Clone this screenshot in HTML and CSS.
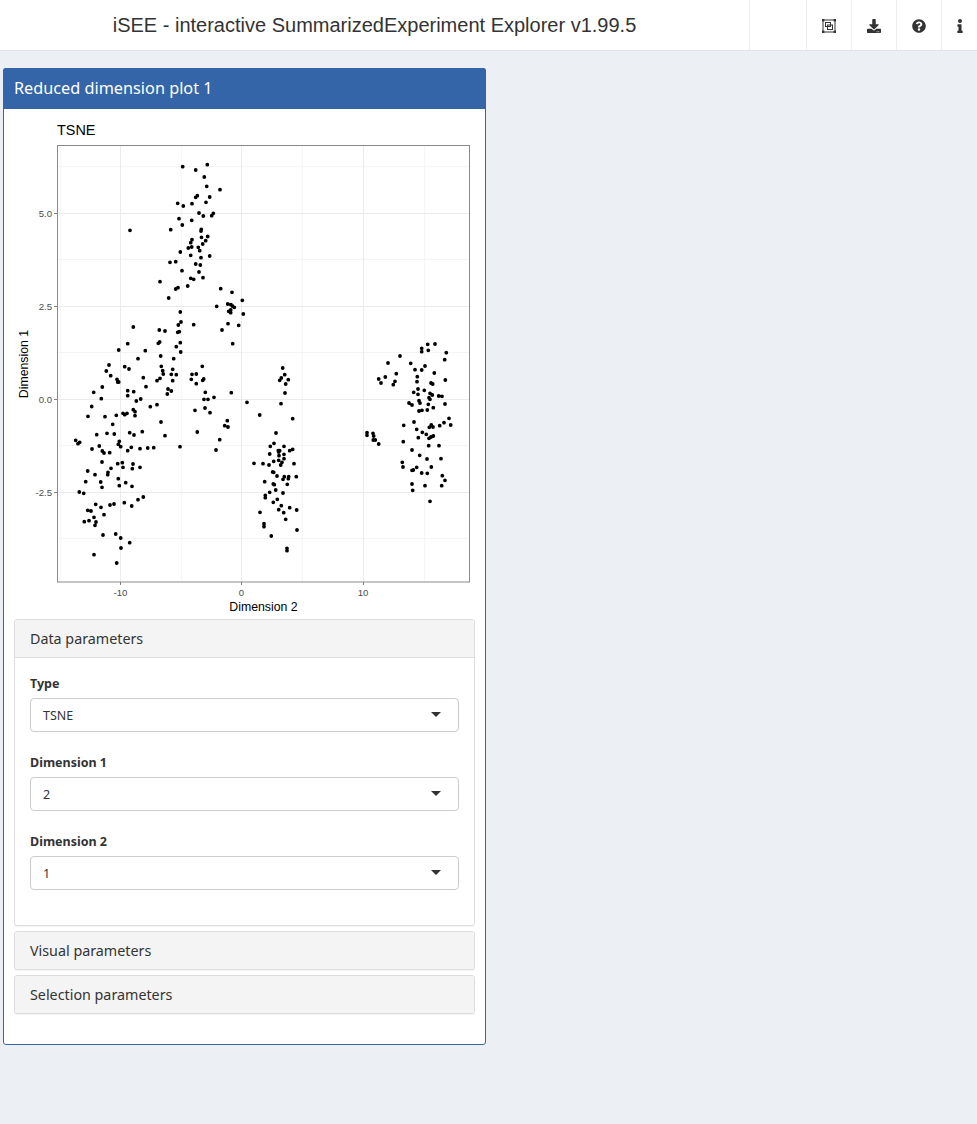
FILE: index.html
```html
<!DOCTYPE html>
<html lang="en">
<head>
<meta charset="UTF-8">
<meta name="viewport" content="width=device-width, initial-scale=1.0">
<title>iSEE - interactive SummarizedExperiment Explorer v1.99.5</title>
<link rel="stylesheet" href="styles.css">
</head>
<body>

<header class="topbar">
    <div class="app-title">iSEE - interactive SummarizedExperiment Explorer v1.99.5</div>
    <div class="nav-item nav-blank"></div>
    <div class="nav-item">
        <svg class="icon" viewBox="0 0 14 14" fill="none" stroke="#333">
            <rect x="1" y="1" width="12" height="12" stroke-width="1"/>
            <rect x="3.5" y="3.5" width="5" height="4" stroke-width="1"/>
            <rect x="5.5" y="6" width="5" height="4.5" stroke-width="1"/>
            <g fill="#333" stroke="none">
                <rect x="0" y="0" width="2.4" height="2.4"/>
                <rect x="11.6" y="0" width="2.4" height="2.4"/>
                <rect x="0" y="11.6" width="2.4" height="2.4"/>
                <rect x="11.6" y="11.6" width="2.4" height="2.4"/>
            </g>
        </svg>
    </div>
    <div class="nav-item">
        <svg class="icon" viewBox="0 0 512 512"><path fill="#333" d="M216 0h80c13.3 0 24 10.7 24 24v168h87.7c17.8 0 26.7 21.5 14.1 34.1L269.7 378.3c-7.5 7.5-19.8 7.5-27.3 0L90.1 226.1c-12.6-12.6-3.7-34.1 14.1-34.1H192V24c0-13.3 10.7-24 24-24zm296 376v112c0 13.3-10.7 24-24 24H24c-13.3 0-24-10.7-24-24V376c0-13.3 10.7-24 24-24h146.7l49 49c20.1 20.1 52.5 20.1 72.6 0l49-49H488c13.3 0 24 10.7 24 24zm-124 88c0-11-9-20-20-20s-20 9-20 20 9 20 20 20 20-9 20-20zm64 0c0-11-9-20-20-20s-20 9-20 20 9 20 20 20 20-9 20-20z"/></svg>
    </div>
    <div class="nav-item">
        <svg class="icon" viewBox="0 0 512 512"><path fill="#333" d="M504 256c0 136.997-111.043 248-248 248S8 392.997 8 256C8 119.083 119.043 8 256 8s248 111.083 248 248zM262.655 90c-54.497 0-89.255 22.957-116.549 63.758-3.536 5.286-2.353 12.415 2.715 16.258l34.699 26.31c5.205 3.947 12.621 3.008 16.665-2.122 17.864-22.658 30.113-35.797 57.303-35.797 20.429 0 45.698 13.148 45.698 32.958 0 14.976-12.363 22.667-32.534 33.976C247.128 238.528 216 254.941 216 296v4c0 6.627 5.373 12 12 12h56c6.627 0 12-5.373 12-12v-1.333c0-28.462 83.186-29.647 83.186-106.667 0-58.002-60.165-102-116.531-102zM256 338c-25.365 0-46 20.635-46 46 0 25.364 20.635 46 46 46s46-20.636 46-46c0-25.365-20.635-46-46-46z"/></svg>
    </div>
    <div class="nav-item nav-last">
        <svg class="icon icon-info" viewBox="0 0 192 512"><path fill="#333" d="M20 424.229h20V279.771H20c-11.046 0-20-8.954-20-20V212c0-11.046 8.954-20 20-20h112c11.046 0 20 8.954 20 20v212.229h20c11.046 0 20 8.954 20 20V492c0 11.046-8.954 20-20 20H20c-11.046 0-20-8.954-20-20v-47.771c0-11.046 8.954-20 20-20zM96 0C56.235 0 24 32.235 24 72s32.235 72 72 72 72-32.235 72-72S135.764 0 96 0z"/></svg>
    </div>
</header>

<main class="content">
    <section class="box">
        <h2 class="box-title">Reduced dimension plot 1</h2>
        <div class="box-body">
            <!-- viewBox starts at the box corner so the numbers read as page coordinates -->
            <svg class="plot" viewBox="4 109 481 510">
                <text class="plot-title" x="57" y="135">TSNE</text>

                <path class="grid-minor" d="M60 146V582M181.300 146V582M302.300 146V582M424.700 146V582M58 166.700H469M58 259.500H469M58 352.500H469M58 445.500H469M58 538.500H469"/>
                <path class="grid-major" d="M120.500 146V582M241.500 146V582M363.500 146V582M58 213.500H469M58 306.500H469M58 399.500H469M58 492.500H469"/>

                <path class="dots" d="M182.700 166.700h0M195.700 170h0M207.300 164.700h0M204.300 177h0M206.700 186.300h0M220 189.700h0M197.300 195.700h0M195.700 197.300h0M209.700 197h0M177.700 203.300h0M183.300 206h0M192 203.700h0M206 202.300h0M199 213h0M203.300 216h0M213.300 213.300h0M211.700 215.700h0M179 218.700h0M191.700 220.300h0M182.300 225h0M130 230.300h0M170.700 229.700h0M201.300 229.300h0M201 231h0M201.500 237.300h0M207.700 236.500h0M192 239.700h0M190.700 242.700h0M205.700 240.700h0M202.700 244h0M188.300 248h0M191.700 247h0M198.300 247.300h0M199.700 250.700h0M180.300 252h0M190.700 255.300h0M201 257.700h0M209.700 256h0M170 262.300h0M175.700 261.700h0M195.700 264h0M200.300 265h0M182 270.700h0M199 272h0M190.700 278.300h0M193.700 279.300h0M203 277.700h0M160 281.700h0M187.700 286h0M175.700 289h0M178 287.700h0M220.700 288.700h0M232 292.300h0M168.700 298h0M242.300 300.300h0M216.700 306.300h0M227.700 304h0M231 304.700h0M232.300 306h0M234.300 307.300h0M243.300 314h0M230.700 310h0M228.700 311.300h0M230.700 312.700h0M180.300 312h0M181 322h0M178.300 325h0M228 323.700h0M238.700 325.300h0M193.700 324.700h0M222 330h0M133.300 327h0M159.300 330h0M165 331h0M177.700 332.300h0M179.300 331.700h0M180.300 342.700h0M232.700 343.700h0M127.700 343.700h0M158.300 343.300h0M159.700 342h0M176.300 346.700h0M118.700 350h0M145.300 350.700h0M180.700 352h0M160.700 356h0M138 358.700h0M173.700 358.700h0M109 365h0M161.300 366.300h0M202.300 366.300h0M124.700 366.700h0M129 369h0M172.700 369.300h0M106.300 371h0M162.700 370.700h0M163.300 374h0M171.300 374.300h0M176.300 374.700h0M192 374.300h0M196.300 374h0M110.700 375.700h0M143.300 377.700h0M160 378.300h0M117 379.300h0M118.700 382h0M117.700 382h0M191.300 379.300h0M203.700 379h0M202.700 380.300h0M157 380.700h0M172.700 380.700h0M196.300 383.700h0M102.300 387h0M146 386.700h0M168 389h0M127.700 390.700h0M171.300 391h0M93.700 392.300h0M133.700 391.700h0M205.300 392.300h0M231.300 392.700h0M167.300 394h0M127.700 395.700h0M214 397.300h0M101.300 398.700h0M140.700 399h0M204 399.300h0M208 399.300h0M247 402.300h0M136.300 401h0M91.700 406.500h0M157 404.700h0M150.300 406.700h0M205 408h0M133.300 409.700h0M195 410.300h0"/>
                <path class="dots" d="M210 412.700h0M259.700 415h0M88 416.300h0M105 416.700h0M116.300 415.300h0M123 413.300h0M124.700 414.700h0M127 413.300h0M135 411.700h0M135 415.700h0M161 422h0M227.300 420.700h0M224.700 425.700h0M228 427h0M112.700 424.300h0M142.300 431.700h0M197.300 432h0M165 435.700h0M96.700 434.700h0M107 433.300h0M114.300 434h0M129.700 432.700h0M134 435h0M219.700 439.700h0M75.700 440.300h0M78 443.700h0M79.700 442.300h0M119.300 441.300h0M118.300 444.300h0M120.700 446.700h0M99.300 446h0M131.300 447.300h0M92 449h0M140 448.700h0M147.700 448h0M153.700 447.700h0M180 446.700h0M127.700 450.700h0M102.300 451h0M104 453h0M109.700 452.700h0M216 450h0M102 462h0M117.700 463.700h0M122.300 462.700h0M133 464h0M111 468.300h0M123 467.300h0M132.300 468.700h0M140 467.300h0M87.700 471h0M108 472.300h0M107.700 474.700h0M95 474.700h0M118.300 478.700h0M85.700 481.700h0M100.700 482h0M125.700 482.700h0M119.300 485.700h0M102 487.300h0M132 486.300h0M79.300 492h0M83.700 493.300h0M143.300 497h0M138 499.700h0M124.300 502.700h0M95.700 504.300h0M114 504h0M110 505h0M101 507.300h0M131.700 506h0M87.700 510.300h0M91 511h0M104 514.700h0M94 517.300h0M84.300 521.700h0M89 520.700h0M96 522h0M95 525.300h0M103 535h0M115.700 534h0M120.700 538h0M129.700 542.700h0M121 548h0M94 554.700h0M116.700 563h0"/>
                <path class="dots" d="M282.700 368h0M284.700 374.700h0M288.300 379.700h0M281.300 378h0M279.700 380.300h0M285.700 384h0M285 393h0M281 403.700h0M292.700 418.700h0M276 433h0M274 443.300h0M270.300 446.300h0M284 446.300h0M292.700 449.300h0M289.700 450.700h0M278.300 450.700h0M279.700 450.700h0M278.700 452h0M269.700 454h0M284 454.300h0M279 455.700h0M284 458.700h0M278.700 460.300h0M273.700 461.300h0M282 462.300h0M280.700 465h0M254 463.300h0M263 463.700h0M269 465h0M294 463.700h0M272.700 472h0M273.700 472.300h0M277 476h0M284.300 476.700h0M283 479.300h0M288.700 476.700h0M288.300 478.700h0M296.300 476.700h0M264.700 481.700h0M273.300 484h0M274.300 484.700h0M287.300 484.300h0M275.700 490h0M269.700 492.300h0M283 493h0M265.300 495.300h0M265.300 497.700h0M277.300 499.300h0M273.300 502.300h0M281.300 505.700h0M289.700 507.700h0M278.700 509.700h0M296.700 510h0M283.700 512.700h0M260 512.300h0M285.700 519.300h0M264 523.700h0M264 526.700h0M297 530h0M271.300 536h0M287 548.300h0M287 550.700h0"/>
                <path class="dots" d="M400 356h0M421.700 348.300h0M421.700 351.700h0M427.700 344.300h0M435 344h0M428.300 350.300h0M446.300 352.700h0M444.700 359.700h0M388 363h0M410.700 363.300h0M425 366h0M415 369.700h0M421.700 370h0M396.300 373.700h0M434.300 373h0M417.300 376.700h0M385.300 377h0M378.700 379h0M381 383h0M395 381.300h0M393.300 384.700h0M417 381.700h0M431 383h0M432.700 384h0M445.300 380h0M418 389h0M424.300 390.300h0M413.700 392.300h0M418 394.300h0M430 393.300h0M432.300 395h0M438.700 396h0M442 396.300h0M429 397.700h0M430 399.300h0M419 400.700h0M420 403h0M409 403h0M412 405h0M428.300 404.300h0M445 404h0M433.300 407.700h0M419 411h0M422 410.300h0M427.300 410h0M449 418.300h0M414 422h0M444 422.700h0M450.700 425h0M403.700 425.300h0M439.700 425.700h0M431.300 425h0M429.300 427.300h0M433 427h0M416.700 429.300h0M422.300 432.300h0M426.300 434.300h0M367 432.700h0M367 435.300h0M373 433.300h0M373.700 436h0M433.300 436h0M431 437h0M429 438.300h0M418.300 437.700h0M373.300 440h0M375.300 440h0M403.300 441.700h0M378.700 444h0M428.700 445.700h0M439 445.700h0M412 450h0M419.700 455.300h0M427 459h0M441 458.700h0M402.300 462.300h0M403 467h0M416.700 467.300h0M412 470.300h0M413.300 470h0M431.300 467h0M421.700 473h0M427.300 473.300h0M442.300 475.700h0M445 480.300h0M412 484h0M425 485.700h0M441.700 485.700h0M412.700 490.300h0M430 501.300h0"/>

                <rect class="frame" x="57.500" y="145.500" width="412" height="436.500"/>
                <path class="ticks" d="M54 213.500H57M54 306.500H57M54 399.500H57M54 492.500H57M120.500 582V585M241.500 582V585M363.500 582V585"/>

                <text class="tick-y" x="52" y="217">5.0</text>
                <text class="tick-y" x="52" y="310">2.5</text>
                <text class="tick-y" x="52" y="403">0.0</text>
                <text class="tick-y" x="52" y="496">-2.5</text>
                <text class="tick-x" x="120.500" y="596">-10</text>
                <text class="tick-x" x="241.500" y="596">0</text>
                <text class="tick-x" x="363" y="596">10</text>
                <text class="axis-title" x="263.500" y="611">Dimension 2</text>
                <text class="axis-title" transform="translate(28 364) rotate(-90)">Dimension 1</text>
            </svg>

            <div class="panel">
                <div class="panel-heading panel-heading-open">Data parameters</div>
                <div class="panel-body">
                    <div class="form-group">
                        <label class="field-label">Type</label>
                        <div class="select-box"><span>TSNE</span><span class="caret"></span></div>
                    </div>
                    <div class="form-group">
                        <label class="field-label">Dimension 1</label>
                        <div class="select-box"><span>2</span><span class="caret"></span></div>
                    </div>
                    <div class="form-group">
                        <label class="field-label">Dimension 2</label>
                        <div class="select-box"><span>1</span><span class="caret"></span></div>
                    </div>
                </div>
            </div>
            <div class="panel">
                <div class="panel-heading">Visual parameters</div>
            </div>
            <div class="panel">
                <div class="panel-heading">Selection parameters</div>
            </div>
        </div>
    </section>
</main>

</body>
</html>
```

FILE: styles.css
```css
body {
    margin: 0;
    min-height: 1124px;
    background-color: #ecf0f5;
    font-family: "Noto Sans", sans-serif;
    color: #333;
}

.topbar {
    display: flex;
    height: 50px;
    background-color: #fff;
    border-bottom: 1px solid #dfe3e8;
}

.app-title {
    width: 749px;
    text-align: center;
    font-family: "Liberation Sans", Arial, sans-serif;
    font-size: 20px;
    line-height: 50px;
}

.nav-item {
    display: flex;
    align-items: center;
    justify-content: center;
    box-sizing: border-box;
    width: 45px;
    border-left: 1px solid #eee;
}

.nav-blank {
    width: 57px;
}

.nav-last {
    width: 36px;
}

.icon {
    width: 14px;
    height: 14px;
    margin-top: 1px;
}

.icon-info {
    width: 6px;
}

.content {
    padding: 17px 3px 0;
}

.box {
    width: 483px;
    box-sizing: border-box;
    border: 1px solid #3465a9;
    border-radius: 3px;
    background-color: #fff;
}

.box-title {
    height: 41px;
    margin: -1px -1px 0;
    padding-left: 11px;
    background-color: #3465a9;
    color: #fff;
    font-size: 16.250px;
    font-weight: 400;
    line-height: 41px;
    border-radius: 3px 3px 0 0;
}

.box-body {
    padding: 0 10px 30px;
}

.plot {
    display: block;
    width: 481px;
    height: 510px;
    margin: 0 -10px;
}

.plot text {
    font-family: "Liberation Sans", Arial, sans-serif;
}

.plot-title {
    font-size: 14.400px;
    fill: #000;
}

.grid-minor {
    fill: none;
    stroke: #f4f4f4;
    stroke-width: 1;
}

.grid-major {
    fill: none;
    stroke: #ebebeb;
    stroke-width: 1;
}

.dots {
    fill: none;
    stroke: #000;
    stroke-width: 3.800;
    stroke-linecap: round;
}

.frame {
    fill: none;
    stroke: #8a8a8a;
    stroke-width: 1;
}

.ticks {
    fill: none;
    stroke: #7f7f7f;
    stroke-width: 1;
}

.tick-y {
    font-size: 9.600px;
    fill: #4d4d4d;
    text-anchor: end;
}

.tick-x {
    font-size: 9.600px;
    fill: #4d4d4d;
    text-anchor: middle;
}

.axis-title {
    font-size: 12.300px;
    fill: #000;
    text-anchor: middle;
}

.panel {
    margin-bottom: 5px;
    border: 1px solid #ddd;
    border-radius: 3px;
    box-shadow: 0 1px 1px rgba(0, 0, 0, 0.05);
    background-color: #fff;
}

.panel:last-child {
    margin-bottom: 0;
}

.panel-heading {
    height: 37px;
    padding-left: 15px;
    background-color: #f4f4f4;
    font-size: 14.300px;
    line-height: 37px;
    border-radius: 3px;
}

.panel-heading-open {
    border-bottom: 1px solid #ddd;
    border-radius: 3px 3px 0 0;
}

.panel-body {
    padding: 15px 15px 15px;
}

.form-group {
    margin-bottom: 20px;
}

.field-label {
    display: block;
    margin-bottom: 4px;
    font-size: 12.500px;
    font-weight: 700;
    line-height: 21px;
}

.select-box {
    display: flex;
    align-items: center;
    justify-content: space-between;
    box-sizing: border-box;
    height: 34px;
    padding: 0 17px 0 12px;
    border: 1px solid #ccc;
    border-radius: 4px;
    font-size: 12.500px;
}

.caret {
    width: 0;
    height: 0;
    margin-top: -1px;
    border-style: solid;
    border-width: 5px 5px 0;
    border-color: #333 transparent transparent;
}
```
